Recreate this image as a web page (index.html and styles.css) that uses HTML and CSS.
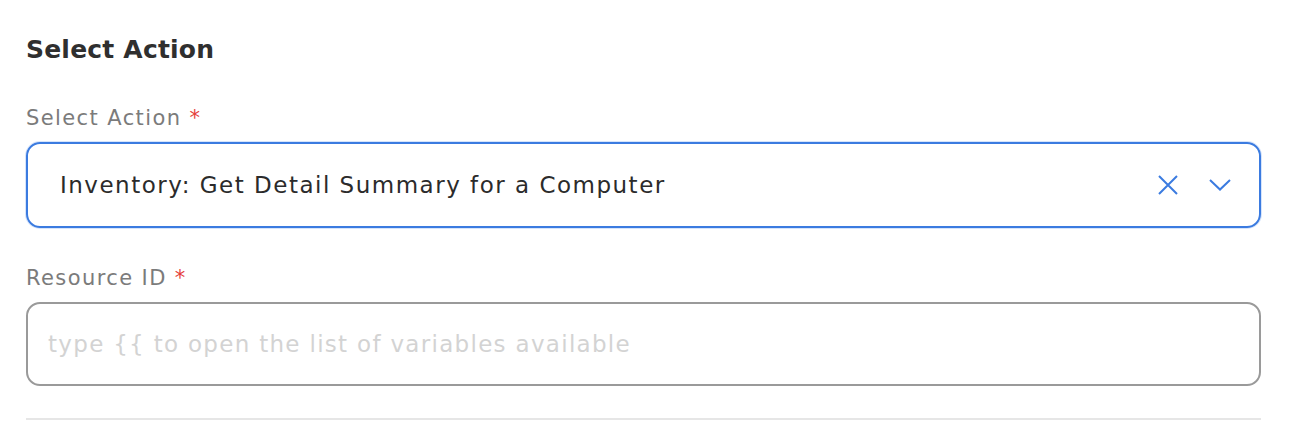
FILE: index.html
```html
<!DOCTYPE html>
<html>
<head>
<meta charset="utf-8">
<link rel="stylesheet" href="styles.css">
</head>
<body>
<div class="panel">
  <h2 class="title">Select Action</h2>
  <div class="field">
    <label class="label">Select Action <span class="req">*</span></label>
    <div class="select">
      <span class="value">Inventory: Get Detail Summary for a Computer</span>
      <span class="icons">
        <svg class="icon" width="20" height="20" viewBox="0 0 20 20"><path d="M1 1 L19 19 M19 1 L1 19" stroke="#3b7be0" stroke-width="2" fill="none"/></svg>
        <svg class="icon" width="22" height="12" viewBox="0 0 22 12"><path d="M1 1 L11 10.5 L21 1" stroke="#3b7be0" stroke-width="2" fill="none"/></svg>
      </span>
    </div>
  </div>
  <div class="field">
    <label class="label">Resource ID <span class="req">*</span></label>
    <div class="input"><span class="placeholder">type {{ to open the list of variables available</span></div>
  </div>
  <div class="divider"></div>
</div>
</body>
</html>
```
FILE: styles.css
```css
html, body { margin: 0; padding: 0; background: #fff; }
body { font-family: "DejaVu Sans", "Inter", sans-serif; }
.panel { padding: 32px 33px 0 26px; display: flex; flex-direction: column; }
.title { margin: 0; font-size: 25px; font-weight: 700; color: #2f2f2f; line-height: 36px; letter-spacing: 0.2px; }
.field { display: flex; flex-direction: column; }
.label { font-size: 21px; color: #7b7b7b; font-weight: 400; line-height: 28px; margin-top: 36px; margin-bottom: 10px; letter-spacing: 1.4px; }
.req { color: #e5403a; }
.select { height: 82px; border: 2px solid #3b7be0; border-radius: 14px; box-shadow: 0 0 0 1px #d6e4fb; display: flex; align-items: center; padding: 0 28px 0 32px; }
.value { flex: 1; font-size: 23px; color: #2b2b2b; letter-spacing: 1.5px; }
.icons { display: flex; align-items: center; gap: 31px; }
.input { height: 80px; border: 2px solid #9a9a9a; border-radius: 14px; display: flex; align-items: center; padding: 0 20px; }
.placeholder { font-size: 23px; color: #d3d3d3; letter-spacing: 1.3px; }
.divider { height: 2px; background: #e6e6e6; margin-top: 32px; }
```
